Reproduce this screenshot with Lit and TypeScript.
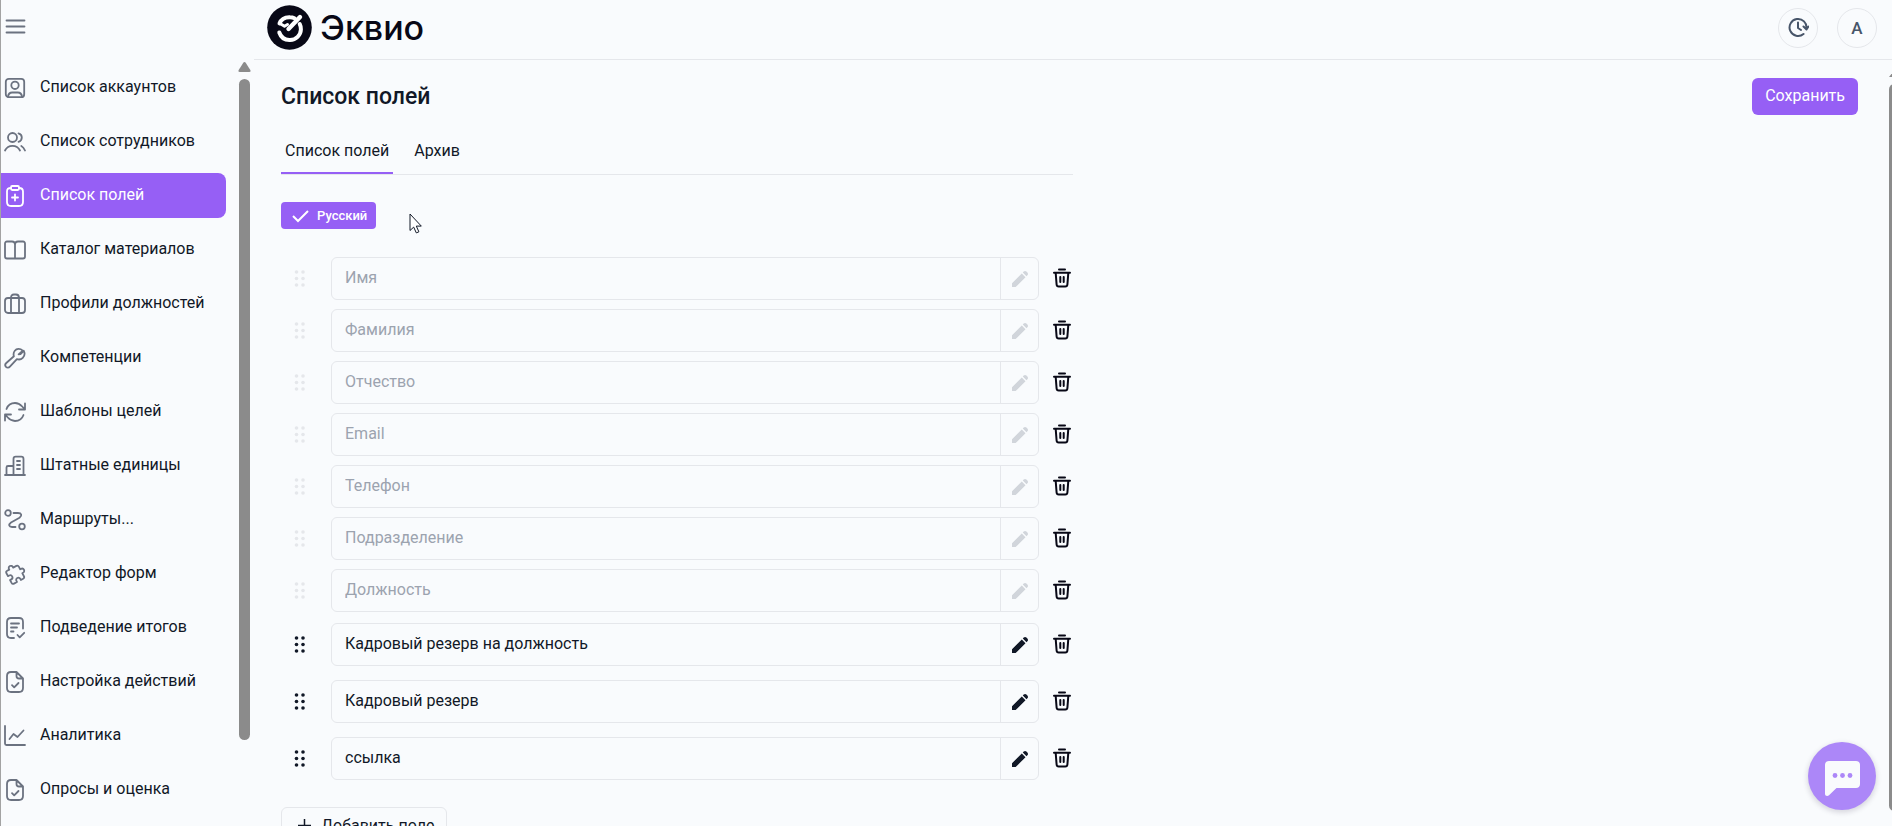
import { LitElement, html, css, svg } from "lit";
import { customElement, property, state } from "lit/decorators.js";
import { classMap } from "lit/directives/class-map.js";

const icons: Record<string, unknown> = {
  account: svg`<rect x="2.8" y="2.8" width="18.4" height="18.4" rx="3"/><circle cx="12" cy="9.3" r="3.7"/><path d="M5 20.8c.3-2.700 1.600-4.300 4.200-4.300h5.600c2.600 0 3.900 1.600 4.200 4.300"/>`,
  people: svg`<circle cx="9.500" cy="7.500" r="4.500"/><path d="M2 20.500c1.500-3 4.300-4.700 7.500-4.700s6 1.700 7.500 4.700M15.500 3.300c2 .6 3.300 2.200 3.300 4.200s-1.300 3.700-3.300 4.300M18.300 16c1.600.9 2.800 2.500 3.700 4.500"/>`,
  clipboard: svg`<path d="M16 4c2.700 0 4 1 4 3.500V18c0 2.800-1.200 4-4 4H8c-2.800 0-4-1.200-4-4V7.500C4 5 5.300 4 8 4"/><rect x="8" y="2" width="8" height="4" rx="1.200"/><path d="M12 10.500v6M9 13.500h6"/>`,
  book: svg`<path d="M12 6.500c0-2 -1-3-3-3H4c-1.300 0-2 .7-2 2v13c0 1.300.7 2 2 2h16c1.300 0 2-.7 2-2v-13c0-1.300-.7-2-2-2h-5c-2 0-3 1-3 3v14"/>`,
  case: svg`<rect x="2" y="6" width="20" height="15" rx="3"/><path d="M8 21V6c0-2.300 1-3.500 3-3.500h2c2 0 3 1.200 3 3.500v15"/>`,
  wrench: svg`<path d="M15.600 8.400 19.800 4.600C17 2.200 13.600 2.500 11.800 4.700c-1.400 1.700-1.500 3.600-.9 5.600L3.300 17c-1.300 1.200-1.300 2.800-.3 3.900 1.100 1.100 2.800 1 3.900-.2l7-7.600c2.100.7 4.200.4 5.900-1.300 1.900-1.900 2.300-4.400 1-7l-3.300 3.300-1.900.3z"/>`,
  refresh: svg`<path d="M22 3.500v6h-6M2 20.500v-6h6M3.500 9C4.800 5.400 8 3 12 3c3.200 0 5.200 1.300 7.200 3.500L22 9.500M20.500 15c-1.300 3.600-4.500 6-8.500 6-3.200 0-5.200-1.300-7.200-3.500L2 14.500"/>`,
  building: svg`<path d="M2 21h20M3.500 21v-7.500c0-1 .6-1.500 1.500-1.500h5.500M10.500 21V5c0-1.500.7-2.300 2.200-2.300h5.600c1.500 0 2.200.8 2.200 2.300v16M14 7h3M14 11h3M14 15h3"/>`,
  route: svg`<circle cx="5" cy="5" r="2.800"/><circle cx="19" cy="18.500" r="2.800"/><path d="M10.500 5H15c3.500 0 4.500 2.500 1.500 4.700L8 14.500c-3 2.200-2 4.500 1 4.500h3.500"/>`,
  puzzle: svg`<path transform="rotate(-28 12 12)" d="M9 5.500V4.800a2.200 2.200 0 1 1 4.400 0v.7h3.600c1.200 0 1.800.6 1.800 1.800v3h.9a2.200 2.200 0 1 1 0 4.400h-.9v3.500c0 1.200-.6 1.800-1.800 1.800h-2.600v-1.200a2.200 2.200 0 1 0-4.400 0V20H6.600c-1.200 0-1.800-.6-1.800-1.800v-3.200h1.400a2.200 2.200 0 1 0 0-4.400H4.800V7.300c0-1.200.6-1.800 1.800-1.800z"/>`,
  summary: svg`<path d="M20 12.500V6c0-2.800-1.200-4-4-4H8C5.200 2 4 3.200 4 6v12c0 2.800 1.200 4 4 4h3M8 7.500h8M8 11.500h6M8 15.500h2.500M14.500 19l2.200 2.300 4.500-4.500"/>`,
  file: svg`<path d="M13.500 2H8C5.200 2 4 3.200 4 6v12c0 2.800 1.200 4 4 4h8c2.800 0 4-1.200 4-4V8.500zM13.500 2.500V6c0 1.700.8 2.500 2.500 2.500h3.500M9 15.200l2.200 2.200 4.300-4.400"/>`,
  chart: svg`<path d="M2 2v17.500c0 .9.400 1.500 1.500 1.500H22M6.500 15l4-5 4 3 6-6.500"/>`,
};

const icon = (name: string) => html`<svg class="icon" viewBox="0 0 24 24" aria-hidden="true">${icons[name]}</svg>`;

@customElement("side-nav")
class SideNav extends LitElement {
  @state() private active = "Список полей";

  private items = [
    ["account", "Список аккаунтов"],
    ["people", "Список сотрудников"],
    ["clipboard", "Список полей"],
    ["book", "Каталог материалов"],
    ["case", "Профили должностей"],
    ["wrench", "Компетенции"],
    ["refresh", "Шаблоны целей"],
    ["building", "Штатные единицы"],
    ["route", "Маршруты..."],
    ["puzzle", "Редактор форм"],
    ["summary", "Подведение итогов"],
    ["file", "Настройка действий"],
    ["chart", "Аналитика"],
    ["file", "Опросы и оценка"],
  ];

  static styles = css`
    :host { display: flex; flex-direction: column; flex: none; width: 253px; height: 100%; overflow: hidden; }
    .top { flex: none; height: 60px; box-sizing: border-box; padding: 14px 1px; }
    .burger { display: block; padding: 0; border: 0; background: none; color: #6b7280; cursor: pointer; }
    .icon { display: block; width: 24px; height: 24px; fill: none; stroke: currentColor; stroke-width: 1.8; stroke-linecap: round; stroke-linejoin: round; }
    .body { display: flex; flex: 1; min-height: 0; }
    nav { flex: 1; overflow: hidden; padding-top: 5px; display: flex; flex-direction: column; gap: 9px; }
    .item { flex: none; box-sizing: border-box; display: flex; align-items: center; gap: 13px; height: 45px; padding: 0 0 2px 2px; border-radius: 0 8px 8px 0; color: #111827; text-decoration: none; font-size: 16px; line-height: 20px; }
    .item .icon { color: #6b7280; margin-top: 2px; }
    .item.active { background: #965ff5; color: #fff; }
    .item.active .icon { color: #fff; }
    .bar { width: 11px; margin: 2px 4px 0 13px; display: flex; flex-direction: column; gap: 7px; }
    .arrow { display: block; width: 13px; height: 10px; margin-left: -1px; fill: #8b8b8b; }
    .thumb { height: 80vh; border-radius: 6px; background: #8b8b8b; }
  `;

  render() {
    return html`
      <div class="top">
        <button class="burger" aria-label="Меню"><svg class="icon" viewBox="0 0 24 24"><path d="M4.500 6.500h18M4.500 12.500h18M4.500 18.500h18"/></svg></button>
      </div>
      <div class="body">
        <nav>
          ${this.items.map(([name, label]) => html`
            <a href="#" class=${classMap({ item: true, active: label === this.active })}
              @click=${(e: Event) => { e.preventDefault(); this.active = label; }}>${icon(name)}<span>${label}</span></a>`)}
        </nav>
        <div class="bar">
          <svg class="arrow" viewBox="0 0 13 10"><path d="M6.500 0c.5 0 .9.300 1.200.7l4.600 7.300c.6 1 .2 2-1 2H1.700c-1.200 0-1.600-1-1-2L5.300.7C5.600.3 6 0 6.500 0z"/></svg>
          <div class="thumb"></div>
        </div>
      </div>`;
  }
}

@customElement("field-row")
class FieldRow extends LitElement {
  @property() value = "";
  @property({ type: Boolean }) locked = false;

  static styles = css`
    :host { display: flex; align-items: center; height: 43px; }
    button { border: 0; background: none; padding: 0; color: #111827; display: flex; align-items: center; justify-content: center; cursor: pointer; }
    .drag { width: 38px; margin-right: 12px; height: 43px; padding-bottom: 2px; }
    .drag svg { width: 12px; height: 18px; fill: currentColor; }
    .box { flex: 1; display: flex; height: 43px; box-sizing: border-box; border: 1px solid #e5e7eb; border-radius: 6px; overflow: hidden; }
    input { flex: 1; min-width: 0; border: 0; outline: 0; background: none; padding: 0 13px 2px; font: 16px Roboto, sans-serif; color: #111827; }
    .edit { width: 38px; border-left: 1px solid #e5e7eb; box-sizing: border-box; }
    .edit svg { width: 18px; height: 18px; fill: currentColor; }
    .locked input { color: #9ca3af; }
    .locked .edit { color: #d1d5db; }
    .locked.drag { color: #e5e7eb; }
    .del { width: 34px; height: 43px; color: #080816; padding: 0 0 1px 12px; box-sizing: border-box; }
    .del svg { width: 20px; height: 20px; fill: none; stroke: currentColor; stroke-width: 2; stroke-linecap: round; stroke-linejoin: round; }
  `;

  render() {
    return html`
      <button class=${classMap({ drag: true, locked: this.locked })} ?disabled=${this.locked} aria-label="Переместить">
        <svg viewBox="0 0 12 18"><circle cx="2.500" cy="3" r="1.800"/><circle cx="9" cy="3" r="1.800"/><circle cx="2.500" cy="9.500" r="1.800"/><circle cx="9" cy="9.500" r="1.800"/><circle cx="2.500" cy="16" r="1.800"/><circle cx="9" cy="16" r="1.800"/></svg>
      </button>
      <div class=${classMap({ box: true, locked: this.locked })}>
        <input aria-label="Название поля" .value=${this.value} ?disabled=${this.locked} />
        <button class="edit" ?disabled=${this.locked} aria-label="Редактировать">
          <svg viewBox="0 0 18 18"><path d="M1 17v-3.700L10.800 3.500l3.700 3.700L4.700 17zM11.800 2.500l.9-.9c.8-.8 2-.8 2.700 0l1 1c.8.800.8 2 0 2.700l-.9.900z"/></svg>
        </button>
      </div>
      <button class="del" aria-label="Удалить">
        <svg viewBox="0 0 20 20"><path d="M7 1.500h6M2 4.700h16M3.700 5l.9 11.500c.1 1.400.8 2 2.100 2h6.600c1.300 0 2-.6 2.100-2L16.300 5M8.300 9v5M11.700 9v5"/></svg>
      </button>`;
  }
}

@customElement("app-root")
class AppRoot extends LitElement {
  @state() private tab = 0;

  private locked = ["Имя", "Фамилия", "Отчество", "Email", "Телефон", "Подразделение", "Должность"];
  private custom = ["Кадровый резерв на должность", "Кадровый резерв", "ссылка"];

  static styles = css`
    :host { display: flex; position: relative; height: 100vh; overflow: hidden; box-sizing: border-box; border-left: 1px solid #a3a3a3; background: #f9fbfd; color: #111827; font-family: Roboto, sans-serif; font-size: 16px; line-height: 20px; }
    button { font: inherit; color: inherit; cursor: pointer; margin: 0; }
    .page { flex: 1; min-width: 0; display: flex; flex-direction: column; }
    header { flex: none; height: 60px; box-sizing: border-box; border-bottom: 1px solid #e5e7eb; display: flex; align-items: center; gap: 19px; padding: 0 15px 4px 13px; }
    .logo { flex: 1; display: flex; align-items: center; gap: 8px; color: #080816; text-decoration: none; }
    .mark { width: 45px; height: 45px; display: block; }
    .brand { font: 500 34px/44px Inter, sans-serif; }
    .round { width: 40px; height: 40px; padding: 0; border: 1px solid #e5e7eb; border-radius: 50%; background: none; display: flex; align-items: center; justify-content: center; color: #475569; font-weight: 500; font-size: 17px; }
    .round svg { width: 22px; height: 22px; fill: none; stroke: currentColor; stroke-width: 2; stroke-linecap: round; stroke-linejoin: round; }
    .scroll { flex: 1; min-height: 0; display: flex; }
    main { flex: 1; min-width: 0; overflow: hidden; padding: 18px 31px 0 27px; }
    .bar { width: 3px; overflow: hidden; padding-top: 9px; display: flex; flex-direction: column; gap: 7px; }
    .arrow { flex: none; display: block; width: 13px; height: 8px; fill: #8b8b8b; }
    .thumb { flex: none; width: 11px; height: 88vh; border-radius: 6px; background: #8b8b8b; }
    .head { display: flex; align-items: center; justify-content: space-between; }
    h1 { margin: 0; font-size: 23px; line-height: 28px; font-weight: 500; }
    .save { height: 37px; padding: 0 13px 2px; border: 0; border-radius: 6px; background: #965ff5; color: #fff; }
    .form { max-width: 792px; }
    .tabs { display: flex; gap: 17px; margin-top: 16px; border-bottom: 1px solid #e5e7eb; }
    .tab { height: 43px; padding: 0 4px 1px; border: 0; border-bottom: 2px solid transparent; background: none; }
    .tab.on { border-color: #965ff5; }
    .lang { display: flex; align-items: center; gap: 8px; height: 27px; margin-top: 27px; padding: 0 9px 0 11px; border: 0; border-radius: 4px; background: #965ff5; color: #fff; font-size: 13px; font-weight: 500; }
    .lang svg { width: 17px; height: 14px; fill: none; stroke: currentColor; stroke-width: 2; }
    .rows { display: flex; flex-direction: column; gap: 9px; margin-top: 28px; }
    .rows.custom { gap: 14px; margin-top: 11px; }
    .add { display: flex; align-items: center; gap: 10px; height: 37px; margin-top: 27px; padding: 0 12px 0 16px; border: 1px solid #e5e7eb; border-radius: 6px; background: none; }
    .add svg { width: 13px; height: 13px; stroke: currentColor; stroke-width: 1.500; }
    .chat { position: absolute; right: 16px; bottom: 16px; width: 68px; height: 68px; padding: 0; border: 0; border-radius: 50%; background: #ac87f8; box-shadow: 0 2px 5px 1px rgba(40, 30, 60, 0.15); }
    .chat svg { display: block; width: 68px; height: 68px; }
    .pointer { position: absolute; left: 408px; top: 213px; width: 14px; height: 21px; pointer-events: none; }
  `;

  render() {
    return html`
      <side-nav></side-nav>
      <div class="page">
        <header>
          <a class="logo" href="#">
            <svg class="mark" viewBox="0 0 45 45" aria-hidden="true">
              <circle cx="22.500" cy="22.500" r="22.300" fill="#080816"/>
              <path d="M12.500 18.500c1.800-4.500 6-6.500 10.500-6.300 1.800 0 3.200.4 4.500 1M12.300 27.500c1.700 5 5.700 7.700 10.700 7.500 6-.2 10.700-4.800 10.900-10.500.1-2-.3-3.800-1.200-5.500" fill="none" stroke="#fff" stroke-width="4" stroke-linecap="round"/>
              <path d="m13 18.500 4.500 2.700 3-1.700" fill="none" stroke="#fff" stroke-width="3" stroke-linecap="round" stroke-linejoin="round"/>
              <path d="M33 12 21.500 24" stroke="#fff" stroke-width="4.400" stroke-linecap="round"/>
            </svg>
            <span class="brand">Эквио</span>
          </a>
          <button class="round" aria-label="История"><svg viewBox="0 0 22 22"><path d="M19.500 11.500A8.500 8.500 0 1 0 16.500 17M16.500 9.500l3 3 2-3M11 5.500v5.500l3 2"/></svg></button>
          <button class="round">A</button>
        </header>
        <div class="scroll">
          <main>
            <div class="head"><h1>Список полей</h1><button class="save">Сохранить</button></div>
            <div class="form">
              <div class="tabs" role="tablist">
                ${["Список полей", "Архив"].map((t, i) => html`<button role="tab" class=${classMap({ tab: true, on: i === this.tab })} @click=${() => (this.tab = i)}>${t}</button>`)}
              </div>
              <button class="lang"><svg viewBox="0 0 17 14"><path d="m1 7 5 5L16 2"/></svg>Русский</button>
              <div class="rows">${this.locked.map((v) => html`<field-row locked .value=${v}></field-row>`)}</div>
              <div class="rows custom">${this.custom.map((v) => html`<field-row .value=${v}></field-row>`)}</div>
              <button class="add"><svg viewBox="0 0 13 13"><path d="M6.500 0v13M0 6.500h13"/></svg>Добавить поле</button>
            </div>
          </main>
          <div class="bar">
            <svg class="arrow" viewBox="0 0 13 8"><path d="M6.500 0 13 8H0z"/></svg>
            <div class="thumb"></div>
          </div>
        </div>
      </div>
      <button class="chat" aria-label="Чат">
        <svg viewBox="0 0 68 68"><path d="M21 19h27c2.500 0 4 1.500 4 4v19c0 2.500-1.500 4-4 4H28.500L21 53.300c-1.700 1.500-4 .7-4-1.500V23c0-2.500 1.500-4 4-4z" fill="#f9fbfd"/><g fill="#ac87f8"><circle cx="27" cy="33.500" r="2.400"/><circle cx="34.500" cy="33.500" r="2.400"/><circle cx="42" cy="33.500" r="2.400"/></g></svg>
      </button>
      <svg class="pointer" viewBox="0 0 14 21" aria-hidden="true"><path d="M1 1v16.500l3.700-3.400 2.600 5.800 2.600-1.100-2.600-5.700h5z" fill="#fff" stroke="#111827"/></svg>`;
  }
}
